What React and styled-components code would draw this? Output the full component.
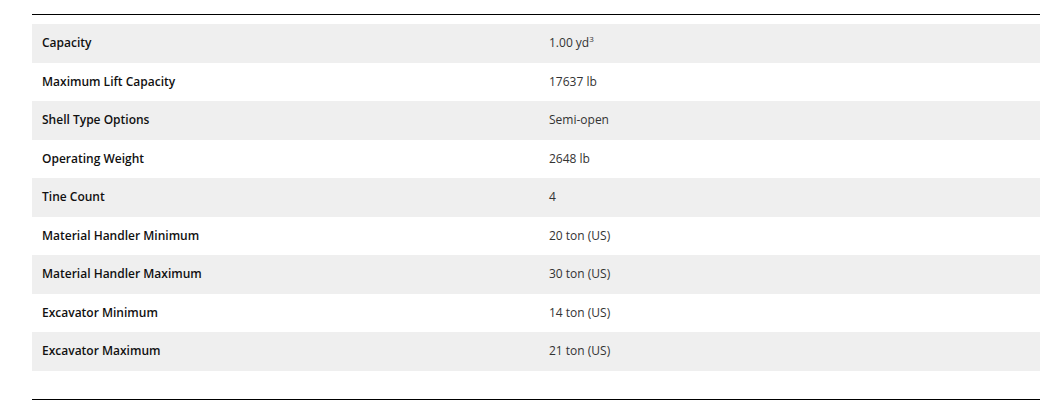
import React from "react";
import styled, { createGlobalStyle } from "styled-components";

const GlobalStyle = createGlobalStyle`
  html, body {
    margin: 0;
    padding: 0;
    background: #fff;
  }
  body {
    font-family: "Open Sans", "Liberation Sans", sans-serif;
    color: #222;
  }
`;

const Wrapper = styled.div`
  padding: 14px 17px 0 32px;
`;

const SpecTable = styled.div`
  border-top: 1px solid #000;
  border-bottom: 1px solid #000;
  padding: 9px 0 28px;
`;

const Row = styled.div`
  display: grid;
  grid-template-columns: 507px 1fr;
  background: ${(p) => (p.$shaded ? "#efefef" : "#fff")};
`;

const Cell = styled.div`
  padding: 10px 10px;
  font-size: 12px;
  line-height: 18.5px;
  font-weight: ${(p) => (p.$label ? 600 : 400)};
  color: ${(p) => (p.$label ? "#111" : "#333")};

  sup {
    font-size: 8px;
    line-height: 0;
    vertical-align: 5px;
  }
`;

const specs = [
  { label: "Capacity", value: <>1.00 yd<sup>3</sup></> },
  { label: "Maximum Lift Capacity", value: "17637 lb" },
  { label: "Shell Type Options", value: "Semi-open" },
  { label: "Operating Weight", value: "2648 lb" },
  { label: "Tine Count", value: "4" },
  { label: "Material Handler Minimum", value: "20 ton (US)" },
  { label: "Material Handler Maximum", value: "30 ton (US)" },
  { label: "Excavator Minimum", value: "14 ton (US)" },
  { label: "Excavator Maximum", value: "21 ton (US)" },
];

export default function App() {
  return (
    <>
      <GlobalStyle />
      <Wrapper>
        <SpecTable>
          {specs.map((s, i) => (
            <Row key={s.label} $shaded={i % 2 === 0}>
              <Cell $label>{s.label}</Cell>
              <Cell>{s.value}</Cell>
            </Row>
          ))}
        </SpecTable>
      </Wrapper>
    </>
  );
}
